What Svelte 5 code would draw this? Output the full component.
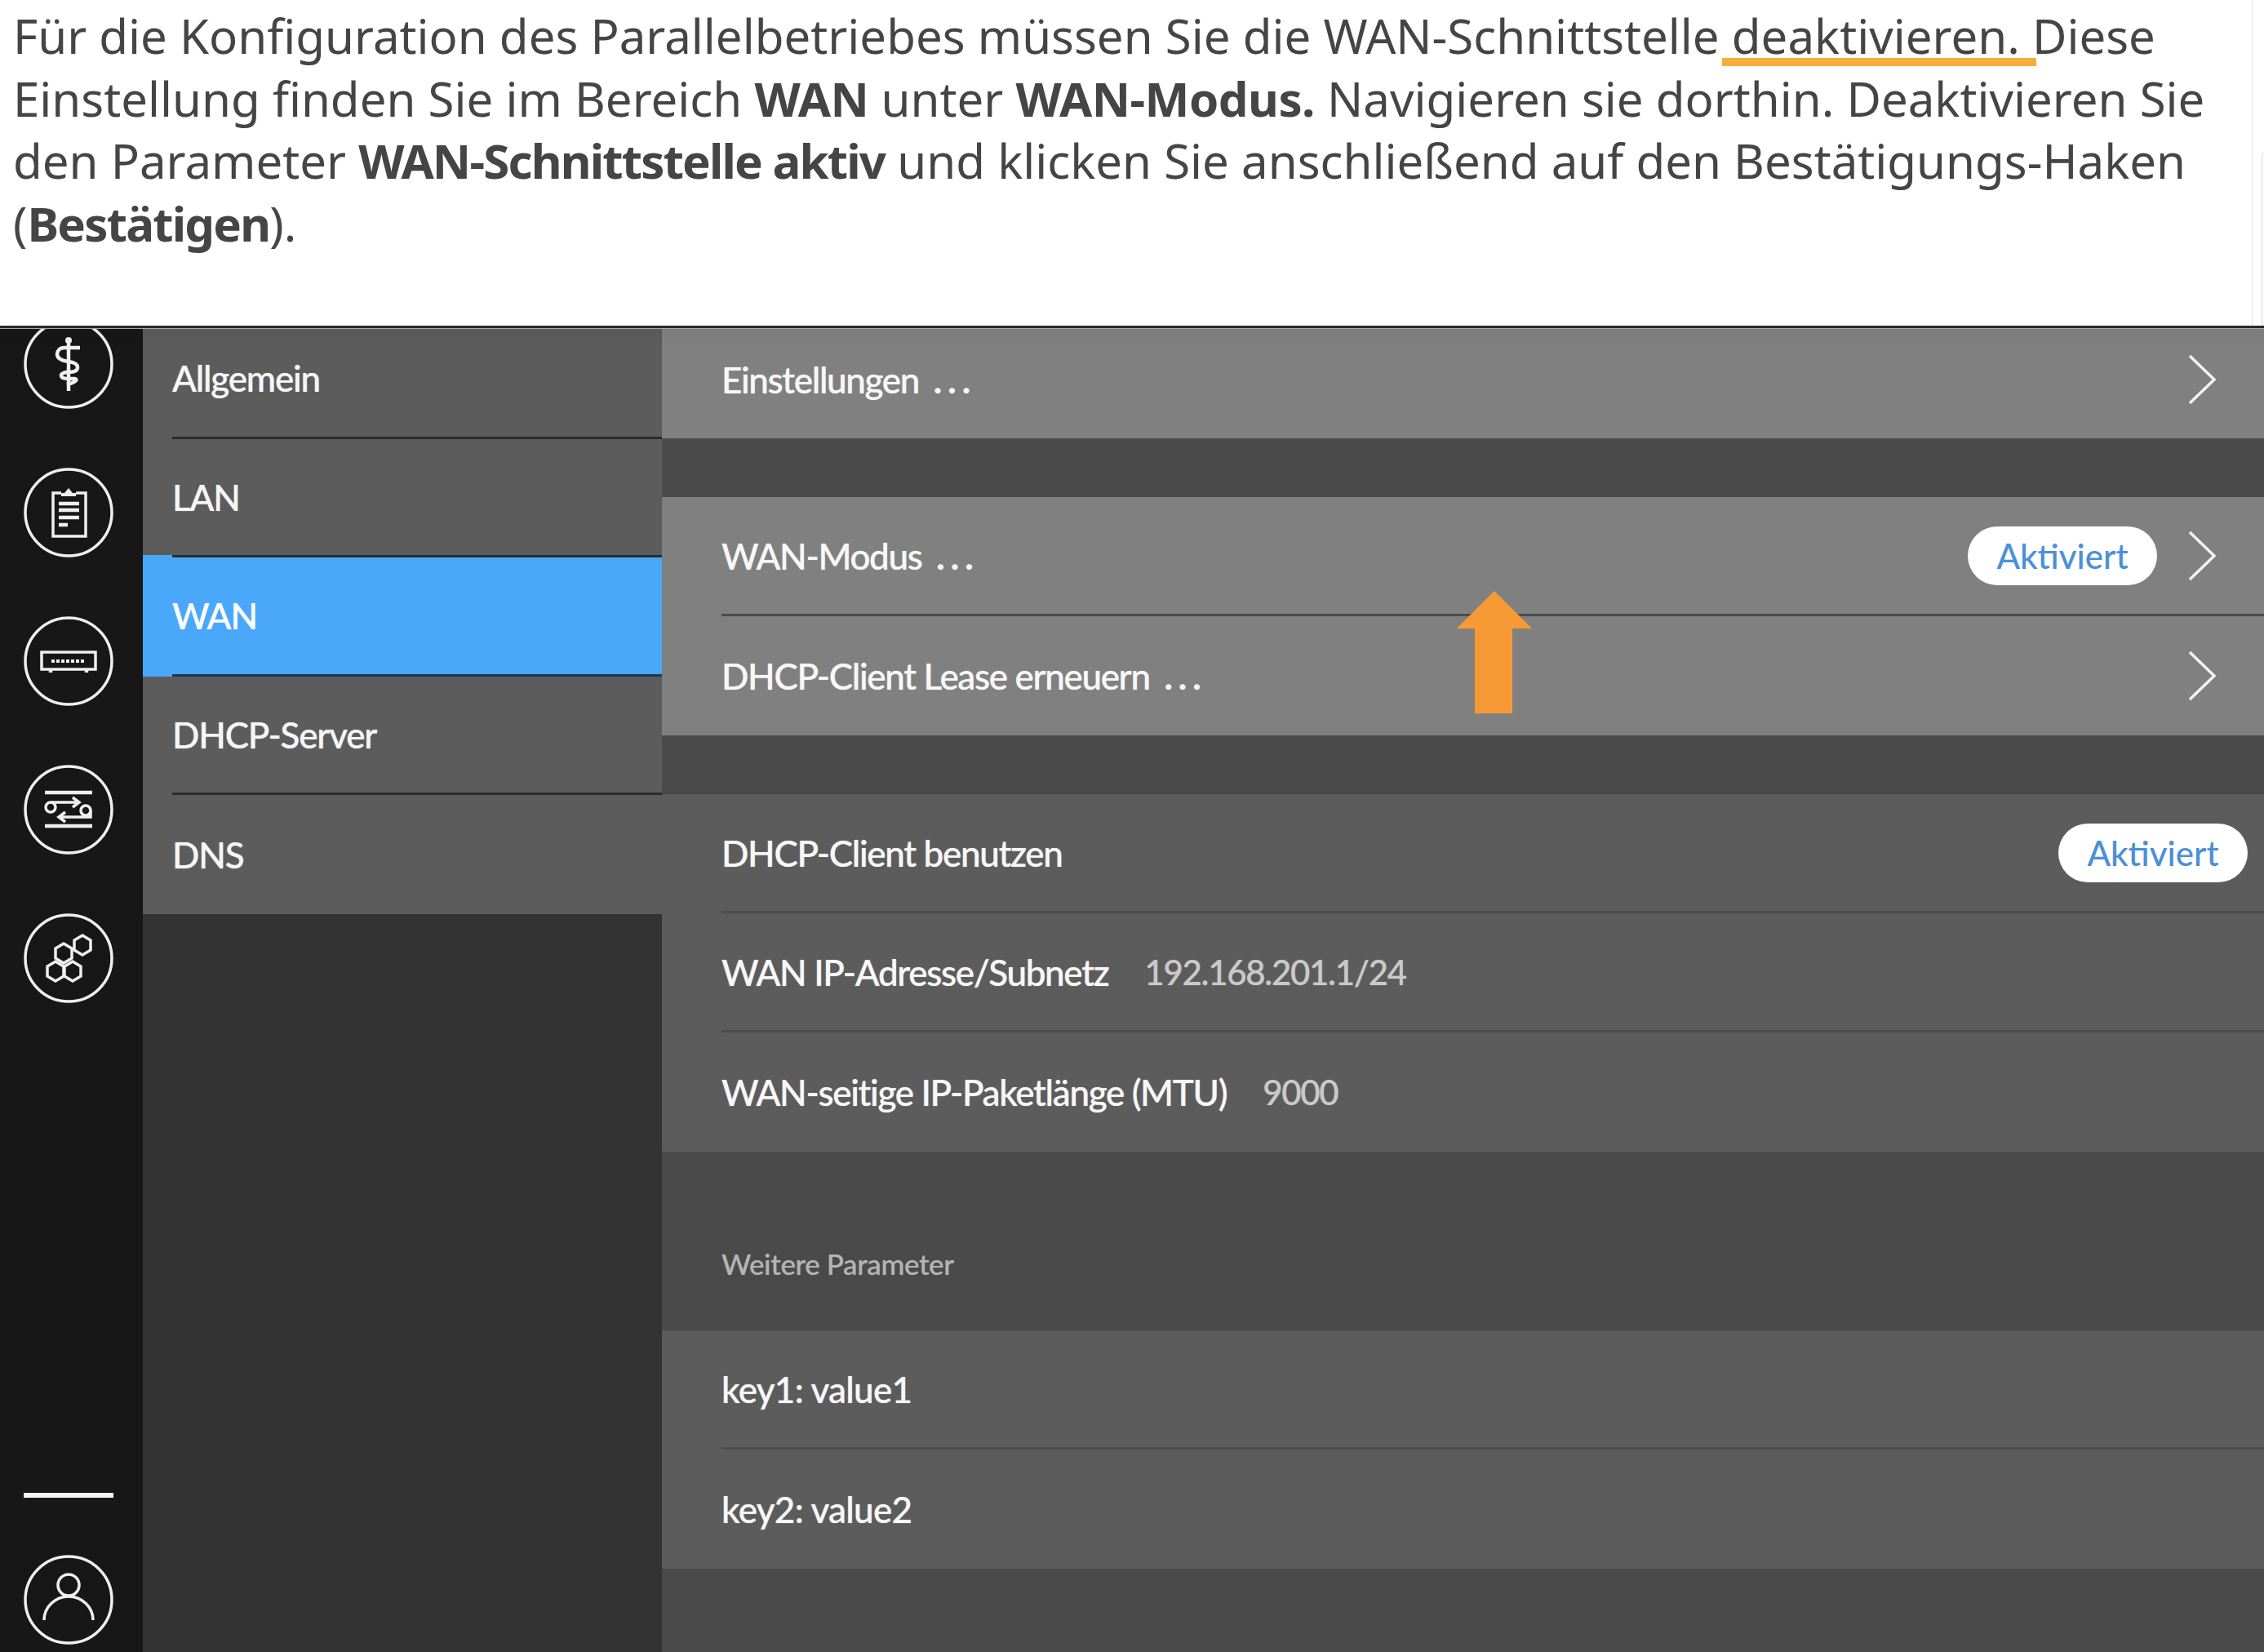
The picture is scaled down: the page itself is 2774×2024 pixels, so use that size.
<script>
	const navItems = ['Allgemein', 'LAN', 'WAN', 'DHCP-Server', 'DNS'];
	const active = 'WAN';

	const groups = [
		{ tone: 'light', rows: [{ label: 'Einstellungen', dots: true, chevron: true, first: true }] },
		{
			tone: 'light',
			rows: [
				{ label: 'WAN-Modus', dots: true, pill: 'Aktiviert', chevron: true },
				{ label: 'DHCP-Client Lease erneuern', dots: true, chevron: true }
			]
		},
		{
			tone: 'dark',
			rows: [
				{ label: 'DHCP-Client benutzen', pill: 'Aktiviert' },
				{ label: 'WAN IP-Adresse/Subnetz', value: '192.168.201.1/24' },
				{ label: 'WAN-seitige IP-Paketlänge (MTU)', value: '9000' }
			]
		}
	];

	const extra = ['key1: value1', 'key2: value2'];
</script>

<div class="page">
	<header class="intro">
		<p class="copy">
			Für die Konfiguration des Parallelbetriebes müssen Sie die WAN-Schnittstelle
			<span class="mark">deaktivieren.</span> Diese<br />
			Einstellung finden Sie im Bereich <b class="wide">WAN</b> unter <b class="wide">WAN-Modus.</b> Navigieren sie dorthin. Deaktivieren Sie<br />
			den Parameter <b>WAN-Schnittstelle aktiv</b> und klicken Sie anschließend auf den Bestätigungs-Haken<br />
			(<b>Bestätigen</b>).
		</p>
		<div class="gutter"><span class="thumb"></span></div>
	</header>
	<div class="edge"></div>

	<div class="shell">
		<aside class="rail">
			<div class="rail-icons">
				<svg class="icon" viewBox="0 0 110 110">
					<circle cx="55" cy="55" r="53" />
					<path class="thick" d="M55 26V88" />
					<circle class="dot" cx="55" cy="26" r="4" />
					<path class="thick" d="M69 35H50C44 35 41 39 41 43C41 49 48 51 55 52C62 53 66 55 66 59C66 63 62 65 55 65C49 65 46 67 46 69C46 72 50 73 55 73H62C66 73 66 77 53 80" />
				</svg>
				<svg class="icon" viewBox="0 0 110 110">
					<circle cx="55" cy="55" r="53" />
					<path d="M46 31H36V84H76V31H64" />
					<path class="solid" d="M46 35V31H50L55 25L60 31H64V35Z" />
					<path class="thick" d="M43 44H68M43 52H68M43 61H68M43 70H54" />
				</svg>
				<svg class="icon" viewBox="0 0 110 110">
					<circle cx="55" cy="55" r="53" />
					<rect x="22" y="44" width="66" height="21" />
					<path class="dash" d="M34 55H76" />
					<path class="thick" d="M33 66V69M77 66V69" />
				</svg>
				<svg class="icon" viewBox="0 0 110 110">
					<circle cx="55" cy="55" r="53" />
					<path class="thick" d="M26 34H84M26 75H84" />
					<circle cx="33" cy="52" r="6" />
					<circle cx="76" cy="56" r="6" />
					<path d="M33 46H67M60 40L68 46L60 52M82 56V64H44M51 58L43 64L51 70" />
				</svg>
				<svg class="icon" viewBox="0 0 110 110">
					<circle cx="55" cy="55" r="53" />
					<path d="M72 27L82 33V45L72 51L62 45V33Z" />
					<path d="M49 37L59 43V55L49 61L39 55V43Z" />
					<path d="M39 59L49 65V77L39 83L29 77V65Z" />
					<path d="M60 59L70 65V77L60 83L50 77V65Z" />
				</svg>
			</div>
			<div class="rail-foot">
				<span class="rule"></span>
				<svg class="icon" viewBox="0 0 110 110">
					<circle cx="55" cy="55" r="53" />
					<circle cx="55" cy="37" r="13" />
					<path d="M25 80A30 29 0 0 1 85 80" />
				</svg>
			</div>
		</aside>

		<nav class="subnav">
			{#each navItems as item, i}
				<div class="nav-item" class:first={i === 0} class:active={item === active}>
					<span class="nav-label">{item}</span>
				</div>
			{/each}
		</nav>

		<main class="content">
			{#each groups as group}
				<section class="group {group.tone}">
					{#each group.rows as row}
						<div class="row" class:first={row.first} class:has-chevron={row.chevron}>
							<span class="label">{row.label}{#if row.dots}{' '}<span class="dots">...</span>{/if}</span>
							{#if row.value}
								<span class="value">{row.value}</span>
							{/if}
							{#if row.pill}
								<span class="pill">{row.pill}</span>
							{/if}
							{#if row.chevron}
								<svg class="chevron" class:alone={!row.pill} viewBox="0 0 34 62">
									<path d="M2 2L32 31L2 60" />
								</svg>
							{/if}
						</div>
					{/each}
				</section>
			{/each}

			<div class="more-title">Weitere Parameter</div>

			<section class="group dark">
				{#each extra as line}
					<div class="row"><span class="label key">{line}</span></div>
				{/each}
			</section>

			<svg class="arrow" viewBox="0 0 92 150">
				<path d="M46 0L92 46H68V150H22V46H0Z" />
			</svg>
		</main>
	</div>
</div>

<style>
	:global(body) {
		margin: 0;
		background: #4a4a4a;
	}

	.page {
		width: 2774px;
		height: 2024px;
		display: flex;
		flex-direction: column;
		overflow: hidden;
		font-family: Lato, 'Noto Sans', sans-serif;
	}

	.intro {
		height: 399px;
		flex: none;
		display: flex;
		background: #fff;
		border-bottom: 3px solid #2b2b2b;
		position: relative;
		z-index: 2;
	}

	.copy {
		flex: 1;
		margin: 0;
		padding: 6px 0 0 16px;
		font-family: 'Noto Sans', sans-serif;
		font-size: 58.2px;
		line-height: 76.5px;
		color: #454545;
		white-space: nowrap;
	}

	.copy b {
		font-weight: 700;
		letter-spacing: -1.8px;
	}

	.copy b.wide {
		letter-spacing: -0.5px;
	}

	.mark {
		position: relative;
	}

	.mark::after {
		content: '';
		position: absolute;
		left: -12px;
		right: -20px;
		top: 67px;
		height: 10px;
		background: #f5ae3e;
	}

	.gutter {
		width: 15px;
		flex: none;
		border-left: 1px solid #e4e4e4;
		display: flex;
		justify-content: flex-end;
		padding-top: 188px;
		box-sizing: border-box;
	}

	.thumb {
		width: 2px;
		height: 209px;
		border: 1px solid #ddd;
		border-right: 0;
		border-radius: 3px 0 0 3px;
	}

	.edge {
		height: 1px;
		flex: none;
		background: #a8a8a8;
		position: relative;
		z-index: 2;
		box-shadow: 0 6px 14px rgba(0, 0, 0, 0.4);
	}

	.shell {
		flex: 1;
		min-height: 0;
		display: flex;
	}

	.rail {
		width: 175px;
		flex: none;
		background: #171717;
		box-sizing: border-box;
		padding: 0 29px 9px;
		display: flex;
		flex-direction: column;
		justify-content: space-between;
		overflow: hidden;
	}

	.rail-icons {
		margin-top: -12px;
		display: flex;
		flex-direction: column;
		gap: 72px;
	}

	.rail-foot {
		display: flex;
		flex-direction: column;
		gap: 70px;
	}

	.rule {
		height: 6px;
		width: 110px;
		background: #f4f4f4;
	}

	.icon {
		display: block;
		width: 110px;
		height: 110px;
		fill: none;
		stroke: #efefef;
		stroke-width: 3.5;
		flex: none;
	}

	.icon .thick {
		stroke-width: 4.5;
	}

	.icon .dash {
		stroke-width: 4;
		stroke-dasharray: 4 2;
	}

	.icon .solid,
	.icon .dot {
		fill: #efefef;
		stroke: none;
	}

	.subnav {
		width: 636px;
		flex: none;
		background: #333;
		display: flex;
		flex-direction: column;
	}

	.nav-item {
		height: 145.5px;
		flex: none;
		padding-left: 36px;
		background: #5c5c5c;
		box-sizing: border-box;
	}

	.nav-item.first {
		height: 134.5px;
	}

	.nav-label {
		display: flex;
		align-items: center;
		height: 100%;
		box-sizing: border-box;
		font-size: 44px;
		font-weight: 500;
		letter-spacing: -1.2px;
		color: #f6f6f6;
		text-shadow: 0 0 1px rgba(255, 255, 255, 0.7);
		border-bottom: 3px solid #2c2c2c;
	}

	.nav-item.first .nav-label {
		padding-bottom: 11px;
	}

	.nav-item:last-child .nav-label {
		border-bottom: 0;
	}

	.nav-item.active {
		background: #4aa8fb;
		position: relative;
	}

	.nav-item.active::before {
		content: '';
		position: absolute;
		left: 0;
		top: -3px;
		width: 36px;
		height: 3px;
		background: #4aa8fb;
	}

	.nav-item.active .nav-label {
		color: #fff;
		border-bottom-color: #1c3650;
	}

	.content {
		flex: 1;
		min-width: 0;
		background: #4a4a4a;
		position: relative;
	}

	.group {
		padding-left: 73px;
		margin-bottom: 72px;
	}

	.group.light {
		background: #808080;
	}

	.group.dark {
		background: #5c5c5c;
		margin-bottom: 0;
	}

	.row {
		height: 146px;
		box-sizing: border-box;
		display: flex;
		align-items: center;
		padding-right: 20px;
		border-bottom: 3px solid #4c4c4c;
		font-size: 44px;
	}

	.row:last-child {
		border-bottom: 0;
	}

	.row.first {
		height: 134px;
		padding-bottom: 11px;
	}

	.row.has-chevron {
		padding-right: 59px;
	}

	.label {
		color: #f7f7f7;
		font-weight: 500;
		letter-spacing: -1.35px;
		text-shadow: 0 0 1px rgba(255, 255, 255, 0.7);
		white-space: pre;
	}

	.label.key {
		letter-spacing: -0.7px;
	}

	.dots {
		margin-left: 8px;
		letter-spacing: 7px;
		font-weight: 700;
	}

	.value {
		margin-left: 44px;
		color: #c9c9c9;
		font-size: 42px;
		font-weight: 500;
		letter-spacing: -1.3px;
		text-shadow: 0 0 1px rgba(201, 201, 201, 0.7);
	}

	.pill {
		margin-left: auto;
		width: 232px;
		height: 72px;
		border-radius: 36px;
		background: #fff;
		color: #4a90d8;
		font-weight: 500;
		font-size: 42px;
		display: flex;
		align-items: center;
		justify-content: center;
	}

	.chevron {
		width: 34px;
		height: 62px;
		margin-left: 38px;
		flex: none;
		fill: none;
		stroke: #f2f2f2;
		stroke-width: 3.5;
	}

	.chevron.alone {
		margin-left: auto;
	}

	.more-title {
		height: 219px;
		box-sizing: border-box;
		padding: 115px 0 0 73px;
		font-size: 35px;
		line-height: 44px;
		font-weight: 500;
		letter-spacing: -0.4px;
		color: #b4b4b4;
		text-shadow: 0 0 1px rgba(180, 180, 180, 0.6);
	}

	/* callout over the WAN-Modus row */
	.arrow {
		position: absolute;
		left: 974px;
		top: 321px;
		width: 92px;
		height: 150px;
		fill: #f79a35;
	}
</style>
